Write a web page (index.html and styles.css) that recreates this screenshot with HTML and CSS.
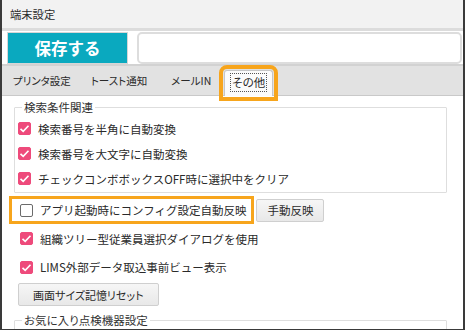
FILE: index.html
```html
<!DOCTYPE html>
<html lang="ja">
<head>
  <meta charset="UTF-8" />
  <title>端末設定</title>
  <link rel="stylesheet" href="styles.css">
</head>
<body>
  <div class="window">
    <div class="titlebar">端末設定</div>

    <div class="toolbar">
      <button class="save-btn">保存する</button>
      <div class="search-box"></div>
    </div>

    <div class="tabs">
      <span class="tab">プリンタ設定</span>
      <span class="tab">トースト通知</span>
      <span class="tab">メールIN</span>
      <span class="tab active"><span class="focus">その他</span></span>
    </div>

    <div class="content">
      <fieldset class="group">
        <legend>検索条件関連</legend>
        <label class="row"><span class="check on"></span>検索番号を半角に自動変換</label>
        <label class="row"><span class="check on"></span>検索番号を大文字に自動変換</label>
        <label class="row"><span class="check on"></span>チェックコンボボックスOFF時に選択中をクリア</label>
      </fieldset>

      <div class="row-with-btn">
        <label class="row highlight"><span class="check"></span>アプリ起動時にコンフィグ設定自動反映</label>
        <button class="btn">手動反映</button>
      </div>

      <label class="row single"><span class="check on"></span>組織ツリー型従業員選択ダイアログを使用</label>
      <label class="row single"><span class="check on"></span>LIMS外部データ取込事前ビュー表示</label>

      <button class="btn reset">画面サイズ記憶リセット</button>

      <fieldset class="group last">
        <legend>お気に入り点検機器設定</legend>
      </fieldset>
    </div>
  </div>
</body>
</html>
```

FILE: styles.css
```css
:root {
  --teal: #0aa9bf;
  --orange: #f7a51c;
  --pink: #ee4a7b;
  --line: #dedede;
  --text: #2a2a2a;
}

* {
  box-sizing: border-box;
}

body {
  margin: 0;
  font-family: "Noto Sans CJK JP", "Noto Sans", sans-serif;
  color: var(--text);
  background: #fff;
}

.window {
  width: 465px;
  height: 330px;
  overflow: hidden;
  border-left: 2px solid #3a3a3a;
  border-right: 2px solid #3a3a3a;
  border-bottom: 1px solid #3a3a3a;
  background: #fff;
}

.titlebar {
  height: 31px;
  padding-left: 8px;
  background: #f2f2f2;
  border-bottom: 3px solid #dcdcdc;
  font-size: 11.3px;
  line-height: 28px;
}

.toolbar {
  display: flex;
  gap: 9px;
  height: 33px;
  padding: 1px 0 0 5px;
}

.save-btn {
  width: 121px;
  height: 32px;
  border: 1px solid #d6d6d6;
  background: var(--teal);
  color: #fff;
  font-family: inherit;
  font-size: 16.5px;
  font-weight: bold;
  padding: 0;
}

.search-box {
  flex: 1;
  height: 32px;
  border: 2px solid #dddddd;
  border-radius: 5px;
  margin-right: 1px;
}

.tabs {
  display: flex;
  align-items: flex-end;
  height: 32px;
  background: #e2e2e2;
  border-top: 2px solid #d2d2d2;
  border-bottom: 1px solid #c9c9c9;
  font-size: 10.5px;
  font-feature-settings: "palt";
  padding-left: 11px;
}

.tab {
  margin-right: 20px;
  line-height: 28px;
  height: 28px;
}

.tab:nth-child(2) {
  margin-right: 24px;
}

.tab.active {
  height: 26px;
  margin-bottom: -1px;
  margin-left: -7px;
  padding: 2px 5px 0 5px;
  background: #fbfbfb;
  border: 1px solid #c6c6c6;
  border-bottom: none;
  border-radius: 3px 3px 0 0;
  outline: 4px solid var(--orange);
  outline-offset: 1px;
  line-height: 17px;
}

.focus {
  display: inline-block;
  border: 1px dotted #555;
  padding: 0 1px;
  font-size: 11.5px;
}

.content {
  padding: 3px 16px 0 12px;
  font-size: 11.5px;
}

.group {
  margin: 0;
  padding: 1px 0 1px 3px;
  border: 1px solid var(--line);
  border-radius: 1px;
}

.group legend {
  padding: 0 2px;
  margin-left: 4px;
  font-size: 11.5px;
  font-feature-settings: "palt";
  color: #333;
}

.row {
  display: flex;
  align-items: center;
  gap: 7px;
  height: 25px;
}

.check {
  width: 13px;
  height: 13px;
  border: 1px solid #6b6b6b;
  border-radius: 2px;
  background: #fff;
  flex-shrink: 0;
}

.check.on {
  border-color: var(--pink);
  background: var(--pink) url("data:image/svg+xml,%3Csvg xmlns='http://www.w3.org/2000/svg' viewBox='0 0 13 13'%3E%3Cpath d='M2.5 6.8l2.7 2.6 5.3-5.6' fill='none' stroke='%23fff' stroke-width='1.6'/%3E%3C/svg%3E") center / 13px 13px no-repeat;
}

.row-with-btn {
  display: flex;
  align-items: center;
  gap: 2px;
  margin: 3px 0 0 -5px;
}

.highlight {
  height: 28px;
  padding: 0 5px 0 8px;
  border: 3px solid var(--orange);
}

.btn {
  height: 23px;
  padding: 0 10px;
  border: 1px solid #cfcfcf;
  border-radius: 2px;
  background: linear-gradient(#f6f6f6, #e8e8e8);
  font-family: inherit;
  font-size: 11.5px;
  font-feature-settings: "palt";
  color: var(--text);
  white-space: nowrap;
}

.single {
  height: 29px;
  padding-left: 6px;
}

.single + .single {
  height: 28px;
}

.reset {
  display: block;
  margin: 2px 0 0 4px;
  padding: 0 14px;
  font-size: 11px;
}

.group.last {
  margin-top: 6px;
  height: 40px;
}
```
